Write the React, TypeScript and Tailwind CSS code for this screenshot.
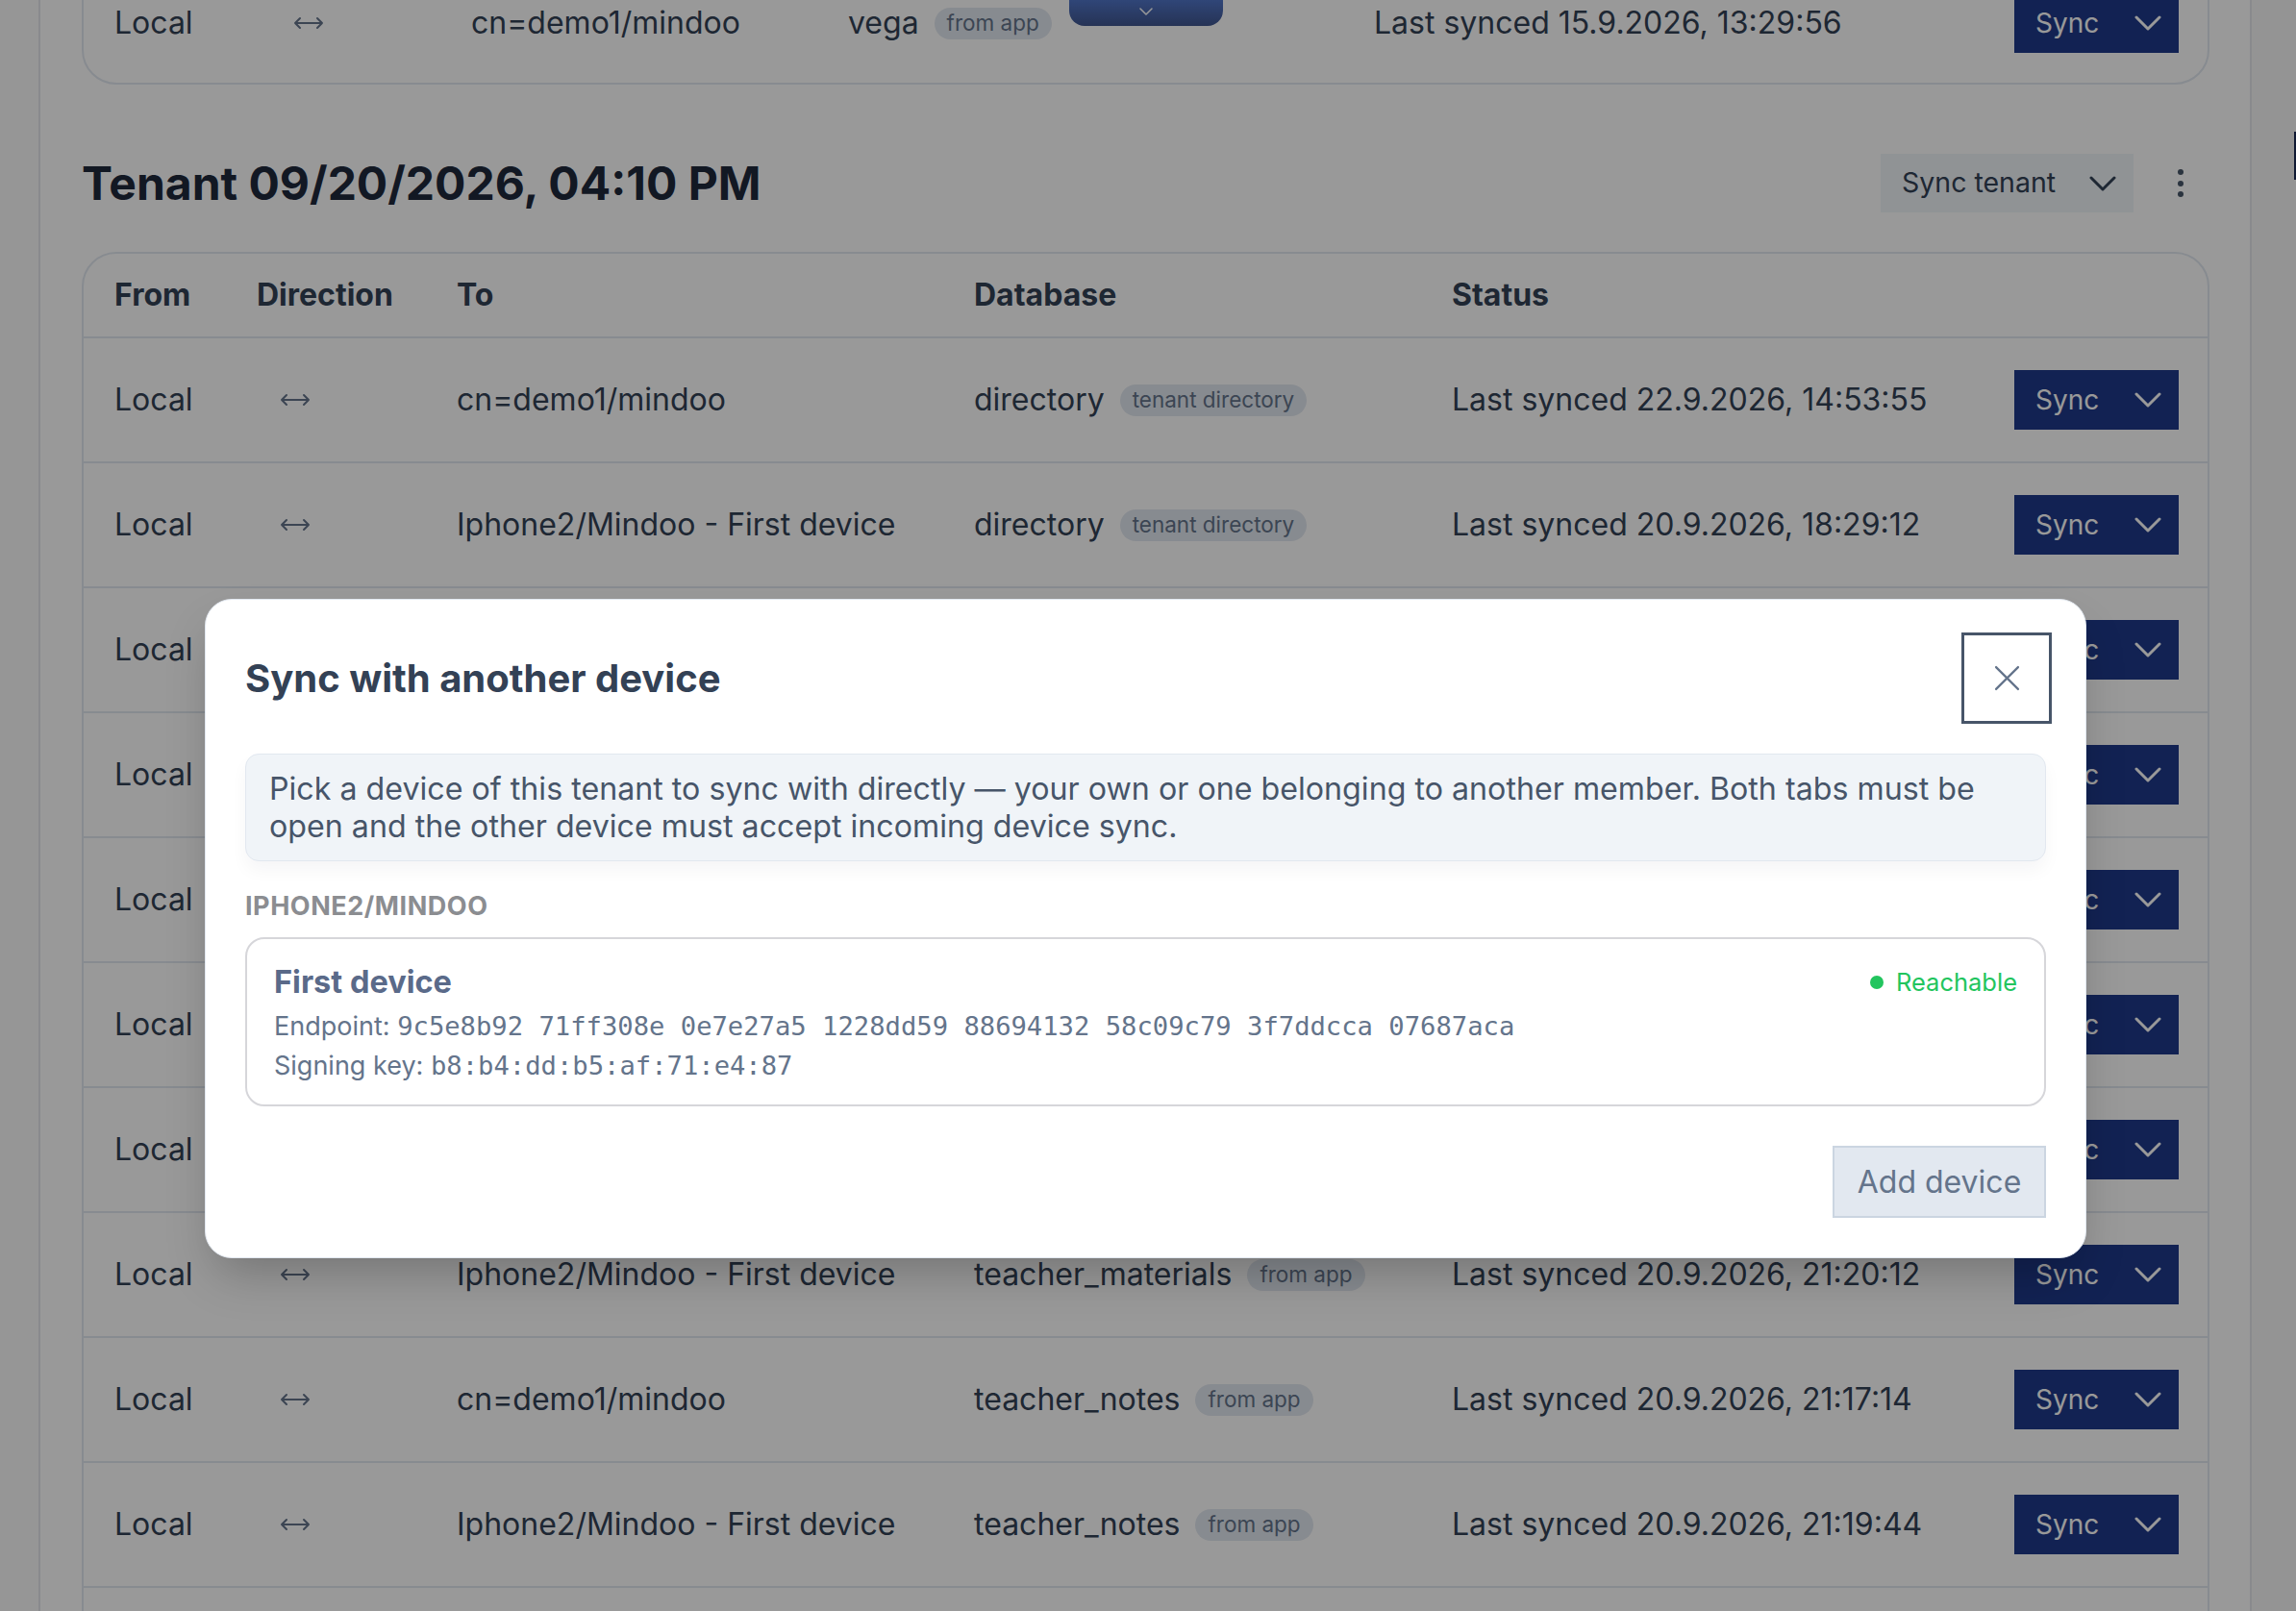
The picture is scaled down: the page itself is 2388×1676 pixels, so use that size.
import React from "react";

type SyncEntry = {
  to: string;
  db: string;
  badge: string;
  synced: string;
};

const entries: SyncEntry[] = [
  { to: "cn=demo1/mindoo", db: "directory", badge: "tenant directory", synced: "Last synced 22.9.2026, 14:53:55" },
  { to: "Iphone2/Mindoo - First device", db: "directory", badge: "tenant directory", synced: "Last synced 20.9.2026, 18:29:12" },
  { to: "cn=demo1/mindoo", db: "students", badge: "from app", synced: "Last synced 20.9.2026, 21:16:40" },
  { to: "Iphone2/Mindoo - First device", db: "students", badge: "from app", synced: "Last synced 20.9.2026, 21:18:02" },
  { to: "cn=demo1/mindoo", db: "lessons", badge: "from app", synced: "Last synced 20.9.2026, 21:16:58" },
  { to: "Iphone2/Mindoo - First device", db: "lessons", badge: "from app", synced: "Last synced 20.9.2026, 21:19:20" },
  { to: "cn=demo1/mindoo", db: "teacher_materials", badge: "from app", synced: "Last synced 20.9.2026, 21:17:05" },
  { to: "Iphone2/Mindoo - First device", db: "teacher_materials", badge: "from app", synced: "Last synced 20.9.2026, 21:20:12" },
  { to: "cn=demo1/mindoo", db: "teacher_notes", badge: "from app", synced: "Last synced 20.9.2026, 21:17:14" },
  { to: "Iphone2/Mindoo - First device", db: "teacher_notes", badge: "from app", synced: "Last synced 20.9.2026, 21:19:44" },
  { to: "cn=demo1/mindoo", db: "vega", badge: "from app", synced: "Last synced 20.9.2026, 21:17:30" },
];

const Chevron = ({ className = "" }: { className?: string }) => (
  <svg viewBox="0 0 28 16" className={className} fill="none" stroke="currentColor" strokeWidth={3} strokeLinecap="round" strokeLinejoin="round">
    <path d="M2 2l12 12 12-12" />
  </svg>
);

// two-headed arrow for the Direction column
const BothWays = () => (
  <svg viewBox="0 0 32 16" className="h-[16px] w-[32px] text-[#64748b]" fill="none" stroke="currentColor" strokeWidth={2} strokeLinecap="round" strokeLinejoin="round">
    <path d="M2 8h28M7 3L2 8l5 5M25 3l5 5-5 5" />
  </svg>
);

const Badge = ({ label }: { label: string }) => (
  <span className="ml-[16px] inline-flex h-[33px] items-center rounded-full bg-[#e2e8f0] px-[13px] text-[22.5px] text-[#64748b]">
    {label}
  </span>
);

const SyncButton = () => (
  <button className="flex h-[62px] w-[171px] items-center justify-between bg-[#1e3a8a] pl-[22px] pr-[17px] text-[28px] text-white">
    <span>Sync</span>
    <Chevron className="h-[16px] w-[30px]" />
  </button>
);

const TableRow = ({ entry, grid }: { entry: SyncEntry; grid: string }) => (
  <div className={`grid items-center text-[32px] text-[#334155] ${grid}`}>
    <div className="pl-8">Local</div>
    <div className="pl-[56px]">
      <BothWays />
    </div>
    <div className="whitespace-nowrap pl-8">{entry.to}</div>
    <div className="flex items-center whitespace-nowrap pl-8">
      <span>{entry.db}</span>
      <Badge label={entry.badge} />
    </div>
    <div className="whitespace-nowrap pl-8">{entry.synced}</div>
    <div className="pl-8 pr-[30px]">
      <SyncButton />
    </div>
  </div>
);

const TABLE_GRID = "h-[128px] grid-cols-[148px_208px_538px_497px_1fr_auto]";

export default function App() {
  return (
    <div className="relative h-[1676px] w-full overflow-hidden bg-white font-[Inter,sans-serif]">
      <div className="flex h-full">
        <div className="w-[42px] shrink-0 border-r-2 border-[#e5e7eb] bg-[#fbfbfb]" />

        <main className="-mt-[46px] flex-1 pl-[43px] pr-[42px]">
          {/* previous tenant, scrolled mostly out of view */}
          <section className="overflow-hidden rounded-[36px] border-2 border-[#e2e8f0]">
            <TableRow
              entry={{ to: "cn=demo1/mindoo", db: "vega", badge: "from app", synced: "Last synced 15.9.2026, 13:29:56" }}
              grid="h-[130px] pt-[6px] grid-cols-[186px_185px_392px_547px_1fr_auto] [&>*:nth-child(2)]:pl-8"
            />
          </section>

          <div className="mt-[72px] flex h-[61px] items-center justify-between pr-[10px]">
            <h2 className="text-[48px] font-bold text-[#1e293b]">Tenant 09/20/2026, 04:10 PM</h2>
            <div className="flex items-center">
              <button className="flex h-[61px] w-[263px] items-center justify-between bg-[#f1f5f9] pl-[22px] pr-[18px] text-[28.5px] text-[#334155]">
                <span>Sync tenant</span>
                <Chevron className="h-[16px] w-[28px]" />
              </button>
              <div className="ml-[29px] flex w-[40px] flex-col items-center gap-[5.5px]">
                <span className="h-[6px] w-[6px] rounded-full bg-[#475569]" />
                <span className="h-[6px] w-[6px] rounded-full bg-[#475569]" />
                <span className="h-[6px] w-[6px] rounded-full bg-[#475569]" />
              </div>
            </div>
          </div>

          <section className="mt-[41px] overflow-hidden rounded-[36px] border-2 border-[#e2e8f0]">
            <div className="grid h-[86px] grid-cols-[148px_208px_538px_497px_1fr_auto] items-center text-[32px] font-bold text-[#334155]">
              <div className="pl-8">From</div>
              <div className="pl-8">Direction</div>
              <div className="pl-8">To</div>
              <div className="pl-8">Database</div>
              <div className="pl-8">Status</div>
              <div className="w-[233px]" />
            </div>
            {entries.map((entry, i) => (
              <div key={i} className="border-t-2 border-[#e2e8f0]">
                <TableRow entry={entry} grid={TABLE_GRID} />
              </div>
            ))}
          </section>
        </main>

        <div className="w-[48px] shrink-0 border-l-2 border-[#e5e7eb] bg-[#f7f7f7]" />
      </div>

      {/* collapsed tab hanging from the top edge */}
      <div className="absolute left-[1112px] top-0 flex h-[27px] w-[160px] items-start justify-center rounded-b-[16px] bg-linear-to-b from-[#5075c8] to-[#40568f] pt-[8px] text-white">
        <Chevron className="h-[8px] w-[14px]" />
      </div>
      <div className="absolute right-0 top-[137px] h-[50px] w-[2px] bg-[#1c2a55]" />

      {/* modal backdrop */}
      <div className="absolute inset-0 bg-black/40" />

      <div className="absolute left-[213px] top-[623px] w-[1957px] rounded-[28px] border border-[#e2e8f0] bg-white px-[41px] pb-[41px] pt-[34px] shadow-2xl">
        <div className="flex h-[95px] items-center justify-between">
          <h3 className="text-[40px] font-bold text-[#334155]">Sync with another device</h3>
          <button className="-mr-[6px] flex h-[95px] w-[94px] items-center justify-center border-[3px] border-[#475569] text-[#64748b]">
            <svg viewBox="0 0 26 26" className="h-[27px] w-[27px]" fill="none" stroke="currentColor" strokeWidth={2.2} strokeLinecap="round">
              <path d="M2 2l22 22M24 2L2 24" />
            </svg>
          </button>
        </div>

        <div className="mt-[31px] rounded-[14px] border border-[#e2e8f0] bg-[#f0f4f8] px-6 py-4 text-[32.2px] leading-[39px] text-[#475569] shadow-[0_10px_18px_rgba(15,23,42,0.04)]">
          Pick a device of this tenant to sync with directly — your own or one belonging to another member. Both tabs must be open and the other device must accept incoming device sync.
        </div>

        <div className="mt-[29px] text-[27px] font-bold uppercase leading-[36px] tracking-[0.02em] text-[#8b8d91]">Iphone2/Mindoo</div>

        <div className="mt-[14px] rounded-[20px] border-2 border-[#d6d6da] px-[28px] pb-[20px] pt-[25px] text-[#64748b]">
          <div className="flex h-[40px] items-center justify-between">
            <span className="text-[32.5px] font-bold text-[#5a6a89]">First device</span>
            <span className="flex items-center text-[25.5px] text-[#22c55e]">
              <span className="mr-[13px] h-[14px] w-[14px] rounded-full bg-[#22c55e]" />
              Reachable
            </span>
          </div>
          <div className="mt-[5px] text-[27px] leading-[41px]">
            Endpoint:{" "}
            <span className="font-['DejaVu_Sans_Mono',monospace] text-[27.2px]">9c5e8b92 71ff308e 0e7e27a5 1228dd59 88694132 58c09c79 3f7ddcca 07687aca</span>
          </div>
          <div className="text-[27px] leading-[41px]">
            Signing key: <span className="font-['DejaVu_Sans_Mono',monospace] text-[27.2px]">b8:b4:dd:b5:af:71:e4:87</span>
          </div>
        </div>

        <div className="mt-[41px] flex justify-end">
          <button className="h-[75px] w-[222px] border-2 border-[#cbd5e1] bg-[#e2e8f0] text-[32px] text-[#64748b]">Add device</button>
        </div>
      </div>
    </div>
  );
}
